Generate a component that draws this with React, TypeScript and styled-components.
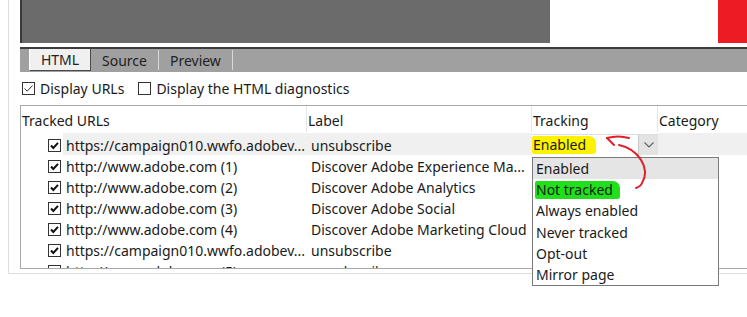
import { ReactNode } from "react";
import styled, { createGlobalStyle } from "styled-components";

const GlobalStyle = createGlobalStyle`
  html, body {
    margin: 0;
    padding: 0;
    background: #ffffff;
  }
  body {
    font-family: "Noto Sans", "Open Sans", sans-serif;
    font-size: 14px;
    color: #1a1a1a;
  }
`;

// page shell ------------------------------------
const Page = styled.div`
  position: relative;
  width: 747px;
  height: 317px;
  overflow: hidden;
  padding-left: 8px;
  box-sizing: border-box;
`;

const OuterPanel = styled.div`
  width: 900px;
  height: 274px;
  box-sizing: border-box;
  border-left: 1px solid #dedede;
  border-bottom: 1px solid #dedede;
  padding-left: 11px;
  display: flex;
  flex-direction: column;
`;

// preview strip ------------------------------------
const PreviewStrip = styled.div`
  display: flex;
  height: 43px;
`;

const DarkPreview = styled.div`
  width: 530px;
  height: 100%;
  background: #6b6b6b;
  border-left: 2px solid #3a3a3a;
  box-sizing: border-box;
`;

const RedBlock = styled.div`
  margin-left: 168px;
  width: 40px;
  height: 100%;
  background: #ed1c24;
`;

// tabs ------------------------------------
const TabBar = styled.div`
  margin-top: 4px;
  height: 25px;
  border-top: 2px solid #3c3c3c;
  background: #a0a0a0;
  display: flex;
  align-items: flex-start;
  padding-left: 9px;
  box-sizing: border-box;
`;

const Tab = styled.div<{ $active?: boolean }>`
  height: 22px;
  display: flex;
  align-items: center;
  padding: 0 11px;
  box-sizing: border-box;
  color: #222;
  font-size: 14px;
  ${(p) =>
    p.$active
      ? `
    width: 62px;
    justify-content: center;
    background: #f0f0f0;
    border-left: 1px solid #ffffff;
    border-right: 1px solid #4a4a4a;
    border-bottom: 1px solid #4a4a4a;
  `
      : `
    border-right: 1px solid #d8d8d8;
    height: 20px;
    margin-top: 1px;
  `}
`;

// options ------------------------------------
const OptionsRow = styled.div`
  display: flex;
  align-items: center;
  gap: 14px;
  height: 18px;
  margin-top: 7px;
  padding-left: 2px;
`;

const OptionLabel = styled.label`
  display: flex;
  align-items: center;
  gap: 5px;
`;

const OptionBox = styled.span`
  width: 13px;
  height: 13px;
  border: 1px solid #333;
  box-sizing: border-box;
  background: #fff;
  display: flex;
  align-items: center;
  justify-content: center;
`;

const Option = ({ checked, children }: { checked?: boolean; children: ReactNode }) => (
  <OptionLabel>
    <OptionBox>
      {checked && (
        <svg width="11" height="11" viewBox="0 0 11 11">
          <path d="M1.5 5.5 L4.2 8.2 L9.5 2.5" fill="none" stroke="#333" strokeWidth="1" />
        </svg>
      )}
    </OptionBox>
    {children}
  </OptionLabel>
);

// table ------------------------------------
const TableBox = styled.div`
  position: relative;
  margin-top: 8px;
  height: 162px;
  border-top: 1px solid #a9a9a9;
  border-left: 1px solid #a9a9a9;
  border-bottom: 1px solid #a9a9a9;
  overflow: hidden;
`;

const columns = "286px 225px 126px 200px";

const HeaderRow = styled.div`
  display: grid;
  grid-template-columns: ${columns};
  height: 26px;
`;

const HeaderCell = styled.div`
  display: flex;
  align-items: center;
  padding: 0 2px 0 1px;
  border-right: 1px solid #e5e5e5;
  padding-top: 2px;
`;

const RowList = styled.div`
  padding-top: 1px;
`;

const Row = styled.div`
  display: grid;
  grid-template-columns: ${columns};
  height: 21px;
`;

const UrlCell = styled.div`
  display: flex;
  align-items: center;
  padding-left: 27px;
  gap: 2px;
  min-width: 0;
`;

const CellText = styled.div<{ $selected?: boolean }>`
  flex: 1;
  height: 100%;
  display: flex;
  align-items: center;
  padding-left: 3px;
  padding-top: 3px;
  box-sizing: border-box;
  white-space: nowrap;
  overflow: hidden;
  background: ${(p) => (p.$selected ? "#f0f0f0" : "transparent")};
`;

const RowBox = styled.span`
  width: 13px;
  height: 13px;
  margin-top: 3px;
  border: 1px solid #333;
  box-sizing: border-box;
  background: #fff;
  display: flex;
  align-items: center;
  justify-content: center;
  flex: none;
`;

const RowCheck = () => (
  <RowBox>
    <svg width="11" height="11" viewBox="0 0 11 11">
      <path d="M2 5.5 L4.3 8 L9 2.8" fill="none" stroke="#111" strokeWidth="2" />
    </svg>
  </RowBox>
);

const Cell = styled.div<{ $selected?: boolean }>`
  display: flex;
  align-items: center;
  padding-left: 4px;
  padding-top: 3px;
  box-sizing: border-box;
  white-space: nowrap;
  overflow: hidden;
  background: ${(p) => (p.$selected ? "#f0f0f0" : "transparent")};
`;

const ComboCell = styled.div`
  display: flex;
  align-items: stretch;
  padding-top: 1px;
`;

// combo ------------------------------------
const Combo = styled.div`
  display: flex;
  flex: 1;
  height: 21px;
  background: #fff;
  border-top: 1px solid #dcdcdc;
  box-sizing: border-box;
`;

const ComboValue = styled.div`
  flex: 1;
  display: flex;
  align-items: center;
  padding-left: 1px;
`;

const ComboButton = styled.div`
  width: 19px;
  background: #e3e3e3;
  border-left: 1px solid #c8c8c8;
  display: flex;
  align-items: center;
  justify-content: center;
`;

const Marker = styled.span<{ $color: string; $right: number }>`
  background: ${(p) => p.$color};
  border-radius: 2px 7px 3px 2px;
  padding: 0 ${(p) => p.$right}px 0 1px;
  margin-left: -1px;
  line-height: 18px;
`;

const DropList = styled.div`
  position: absolute;
  left: 532px;
  top: 157px;
  width: 187px;
  height: 129px;
  box-sizing: border-box;
  border: 1px solid #7a7a7a;
  background: #fff;
  display: flex;
  flex-direction: column;
  padding-top: 0;
`;

const DropItem = styled.div<{ $hover?: boolean }>`
  height: 21.3px;
  display: flex;
  align-items: center;
  padding-left: 3px;
  background: ${(p) => (p.$hover ? "#e5e5e5" : "transparent")};
`;

const Annotation = styled.svg`
  position: absolute;
  left: 0;
  top: 0;
  pointer-events: none;
`;

const rows = [
  { url: "https://campaign010.wwfo.adobev...", label: "unsubscribe", selected: true },
  { url: "http://www.adobe.com (1)", label: "Discover Adobe Experience Ma..." },
  { url: "http://www.adobe.com (2)", label: "Discover Adobe Analytics" },
  { url: "http://www.adobe.com (3)", label: "Discover Adobe Social" },
  { url: "http://www.adobe.com (4)", label: "Discover Adobe Marketing Cloud" },
  { url: "https://campaign010.wwfo.adobev...", label: "unsubscribe" },
  { url: "http://www.adobe.com (5)", label: "unsubscribe" },
];

const trackingOptions = [
  "Enabled",
  "Not tracked",
  "Always enabled",
  "Never tracked",
  "Opt-out",
  "Mirror page",
];

export default function App() {
  return (
    <>
      <GlobalStyle />
      <Page>
        <OuterPanel>
          <PreviewStrip>
            <DarkPreview />
            <RedBlock />
          </PreviewStrip>
          <TabBar>
            <Tab $active>HTML</Tab>
            <Tab>Source</Tab>
            <Tab>Preview</Tab>
          </TabBar>
          <OptionsRow>
            <Option checked>Display URLs</Option>
            <Option>Display the HTML diagnostics</Option>
          </OptionsRow>
          <TableBox>
            <HeaderRow>
              <HeaderCell>Tracked URLs</HeaderCell>
              <HeaderCell>Label</HeaderCell>
              <HeaderCell>Tracking</HeaderCell>
              <HeaderCell>Category</HeaderCell>
            </HeaderRow>
            <RowList>
              {rows.map((row, i) => (
                <Row key={i}>
                  <UrlCell>
                    <RowCheck />
                    <CellText $selected={row.selected}>{row.url}</CellText>
                  </UrlCell>
                  <Cell $selected={row.selected}>{row.label}</Cell>
                  {row.selected ? (
                    <ComboCell>
                      <Combo>
                        <ComboValue>
                          <Marker $color="#fff200" $right={10}>
                            Enabled
                          </Marker>
                        </ComboValue>
                        <ComboButton>
                          <svg width="10" height="6" viewBox="0 0 10 6">
                            <path d="M0.5 0.5 L5 5 L9.5 0.5" fill="none" stroke="#606060" strokeWidth="1.1" />
                          </svg>
                        </ComboButton>
                      </Combo>
                    </ComboCell>
                  ) : (
                    <Cell />
                  )}
                  <Cell $selected={row.selected} />
                </Row>
              ))}
            </RowList>
          </TableBox>
        </OuterPanel>
        <DropList>
          {trackingOptions.map((opt, i) => (
            <DropItem key={opt} $hover={i === 0}>
              {opt === "Not tracked" ? (
                <Marker $color="#1fe01a" $right={7}>
                  {opt}
                </Marker>
              ) : (
                opt
              )}
            </DropItem>
          ))}
        </DropList>
        <Annotation width="747" height="317" viewBox="0 0 747 317">
          <g fill="none" stroke="#e0202a" strokeWidth="2" strokeLinecap="round">
            <path d="M619 145 C 638 149, 651 168, 642 183 C 641 186, 639 187, 636 188" />
            <path d="M607 138 C 614 136, 622 136, 629 138" />
            <path d="M607 138 L 614 145" />
          </g>
        </Annotation>
      </Page>
    </>
  );
}
